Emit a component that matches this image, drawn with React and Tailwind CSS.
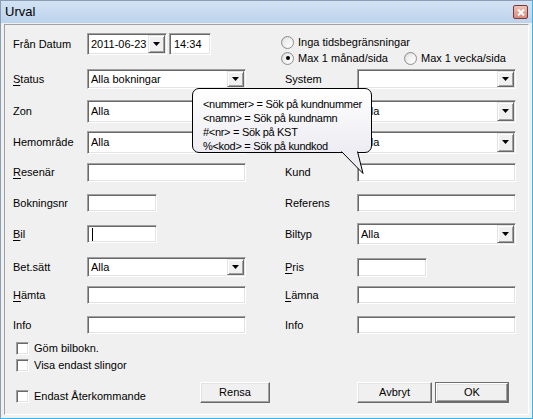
const sunken = 'border border-t-[#a0a0a0] border-l-[#a0a0a0] border-b-white border-r-white shadow-[inset_1px_1px_0_#696969,inset_-1px_-1px_0_#e3e3e3]'

function DropBtn() {
  return (
    <div className="w-[17px] h-full bg-[#f0f0f0] border border-t-[#e3e3e3] border-l-[#e3e3e3] border-b-[#696969] border-r-[#696969] shadow-[inset_1px_1px_0_#fff,inset_-1px_-1px_0_#a0a0a0] flex items-center justify-center">
      <svg width="7" height="4" viewBox="0 0 7 4"><path d="M0 0h7L3.5 4z" fill="#000" /></svg>
    </div>
  )
}

function Combo({ value = '', w = 'w-[159px]', h = 'h-[21px]' }) {
  return (
    <div className={`${w} ${h} bg-white ${sunken} flex items-stretch p-[1px]`}>
      <div className="flex-1 flex items-center pl-[2px] text-black">{value}</div>
      <DropBtn />
    </div>
  )
}

function TextBox({ w = 'w-[159px]', h = 'h-[19px]', caret }) {
  return (
    <div className={`${w} ${h} bg-white ${sunken} flex items-center pl-[4px]`}>
      {caret && <div className="w-px h-[13px] bg-black" />}
    </div>
  )
}

function Label({ children }) {
  return <div className="text-black">{children}</div>
}

function U({ children }) {
  return <span className="underline underline-offset-[2px]">{children}</span>
}

function Radio({ checked, label }) {
  return (
    <div className="flex items-center gap-[4px] leading-[16px]">
      <div className="w-[13px] h-[13px] rounded-full border border-[#8e8f8f] bg-gradient-to-br from-[#d4d4d4] to-white flex items-center justify-center">
        <div className="w-[9px] h-[9px] rounded-full bg-gradient-to-br from-[#e6e6e6] to-white flex items-center justify-center">
          {checked && <div className="w-[4px] h-[4px] rounded-full bg-black" />}
        </div>
      </div>
      <span>{label}</span>
    </div>
  )
}

function Check({ label }) {
  return (
    <div className="flex items-center gap-[5px] leading-[13px]">
      <div className={`w-[13px] h-[13px] bg-white ${sunken}`} />
      <span>{label}</span>
    </div>
  )
}

function Btn({ children, w, def }) {
  return (
    <div className={`${w} h-[21px] ${def ? 'border border-[#6e6e6e]' : ''}`}>
      <div className="w-full h-full bg-[#f0f0f0] border border-t-white border-l-white border-b-[#696969] border-r-[#696969] shadow-[inset_-1px_-1px_0_#a0a0a0,inset_1px_1px_0_#e3e3e3] flex items-center justify-center">
        {children}
      </div>
    </div>
  )
}

function Row({ mt, left, leftInput, right, rightInput }) {
  return (
    <div className={`flex items-center h-[22px] ${mt}`}>
      <div className="w-[74px]">{left}</div>
      <div className="w-[198px]">{leftInput}</div>
      <div className="w-[72px]">{right}</div>
      <div>{rightInput}</div>
    </div>
  )
}

export default function App() {
  return (
    <div className="w-[533px] h-[419px] bg-[#f0f0f0] text-[11px] text-black border border-[#8a9db4] border-r-[#35b6ec] border-b-[#35b6ec] flex flex-col" style={{ fontFamily: '"Liberation Sans", Arial, sans-serif' }}>
      <div className="h-[22px] bg-gradient-to-b from-[#d3e2f3] to-[#bcd3ec] flex items-center justify-between pl-[4px] pr-[4px]">
        <span className="text-[13px] text-black">Urval</span>
        <div className="w-[15px] h-[14px] rounded-[2px] border border-[#7a3a3a] bg-gradient-to-b from-[#eec1b8] to-[#d88a7c] flex items-center justify-center">
          <svg width="8" height="7" viewBox="0 0 8 7"><path d="M1 0.5l6 6M7 0.5l-6 6" stroke="#fff" strokeWidth="2" /></svg>
        </div>
      </div>
      <div className="flex-1 px-[3px] pb-[3px] pt-[1px]">
        <div className="relative h-full border border-t-[#a0a0a0] border-l-[#a0a0a0] border-b-white border-r-white pl-[8px]">
          <div className="flex h-[22px] mt-[8px] items-center">
            <div className="w-[74px]">Från Datum</div>
            <div className={`w-[80px] h-[22px] bg-white ${sunken} flex items-stretch p-[1px]`}>
              <div className="flex-1 flex items-center pl-[2px]">2011-06-23</div>
              <DropBtn />
            </div>
            <div className={`ml-[2px] w-[42px] h-[22px] bg-white ${sunken} flex items-center pl-[4px]`}>14:34</div>
          </div>
          <div className="absolute left-[276px] top-[9px] flex flex-col">
            <Radio label="Inga tidsbegränsningar" />
            <div className="flex">
              <div className="w-[123px]"><Radio checked label="Max 1 månad/sida" /></div>
              <Radio label="Max 1 vecka/sida" />
            </div>
          </div>
          <Row mt="mt-[13px]" left={<Label><U>S</U>tatus</Label>} leftInput={<Combo value="Alla bokningar" h="h-[20px]" />} right={<Label>System</Label>} rightInput={<Combo h="h-[20px]" />} />
          <Row mt="mt-[10px]" left={<Label>Zon</Label>} leftInput={<Combo value="Alla" h="h-[23px]" />} rightInput={<Combo value="Alla" h="h-[23px]" />} />
          <Row mt="mt-[9px]" left={<Label>Hemområde</Label>} leftInput={<Combo value="Alla" h="h-[23px]" />} rightInput={<Combo value="Alla" h="h-[23px]" />} />
          <Row mt="mt-[8px]" left={<Label><U>R</U>esenär</Label>} leftInput={<TextBox />} right={<Label>Kund</Label>} rightInput={<TextBox />} />
          <Row mt="mt-[9px]" left={<Label>Bokningsnr</Label>} leftInput={<TextBox w="w-[70px]" h="h-[18px]" />} right={<Label>Referens</Label>} rightInput={<TextBox h="h-[18px]" />} />
          <Row mt="mt-[9px]" left={<Label><U>B</U>il</Label>} leftInput={<TextBox w="w-[70px]" h="h-[18px]" caret />} right={<Label>Biltyp</Label>} rightInput={<Combo value="Alla" h="h-[22px]" />} />
          <Row mt="mt-[11px]" left={<Label>Bet.sätt</Label>} leftInput={<Combo value="Alla" h="h-[20px]" />} right={<Label><U>P</U>ris</Label>} rightInput={<TextBox w="w-[70px]" />} />
          <Row mt="mt-[6px]" left={<Label><U>H</U>ämta</Label>} leftInput={<TextBox h="h-[18px]" />} right={<Label><U>L</U>ämna</Label>} rightInput={<TextBox h="h-[18px]" />} />
          <Row mt="mt-[8px]" left={<Label>Info</Label>} leftInput={<TextBox h="h-[18px]" />} right={<Label>Info</Label>} rightInput={<TextBox h="h-[18px]" />} />
          <div className="mt-[6px] pl-[3px] flex flex-col gap-[4px]">
            <Check label="Göm bilbokn." />
            <Check label="Visa endast slingor" />
          </div>
          <div className="mt-[10px] flex items-start">
            <div className="w-[187px] pl-[3px] pt-[8px]"><Check label="Endast Återkommande" /></div>
            <Btn w="w-[70px]">Rensa</Btn>
            <div className="ml-[87px]"><Btn w="w-[75px]">Avbryt</Btn></div>
            <div className="ml-[3px]"><Btn w="w-[74px]" def>OK</Btn></div>
          </div>

          <div className="absolute left-[187px] top-[63px] w-[180px] h-[65px] rounded-[7px] border border-black bg-gradient-to-b from-white to-[#ececf2] pl-[10px] pt-[8px] leading-[14px] tracking-[-0.3px] whitespace-nowrap">
            <div>&lt;nummer&gt; = Sök på kundnummer</div>
            <div>&lt;namn&gt; = Sök på kundnamn</div>
            <div>#&lt;nr&gt; = Sök på KST</div>
            <div>%&lt;kod&gt; = Sök på kundkod</div>
          </div>
          <svg className="absolute left-[336px] top-[126px]" width="25" height="25" viewBox="0 0 25 25">
            <path d="M0.5 0.5 L22 22.5 L16.5 0.5" fill="#ececf2" stroke="#000" strokeWidth="1" />
            <path d="M1 0 L16 0" stroke="#ececf2" strokeWidth="2" />
          </svg>
        </div>
      </div>
    </div>
  )
}
